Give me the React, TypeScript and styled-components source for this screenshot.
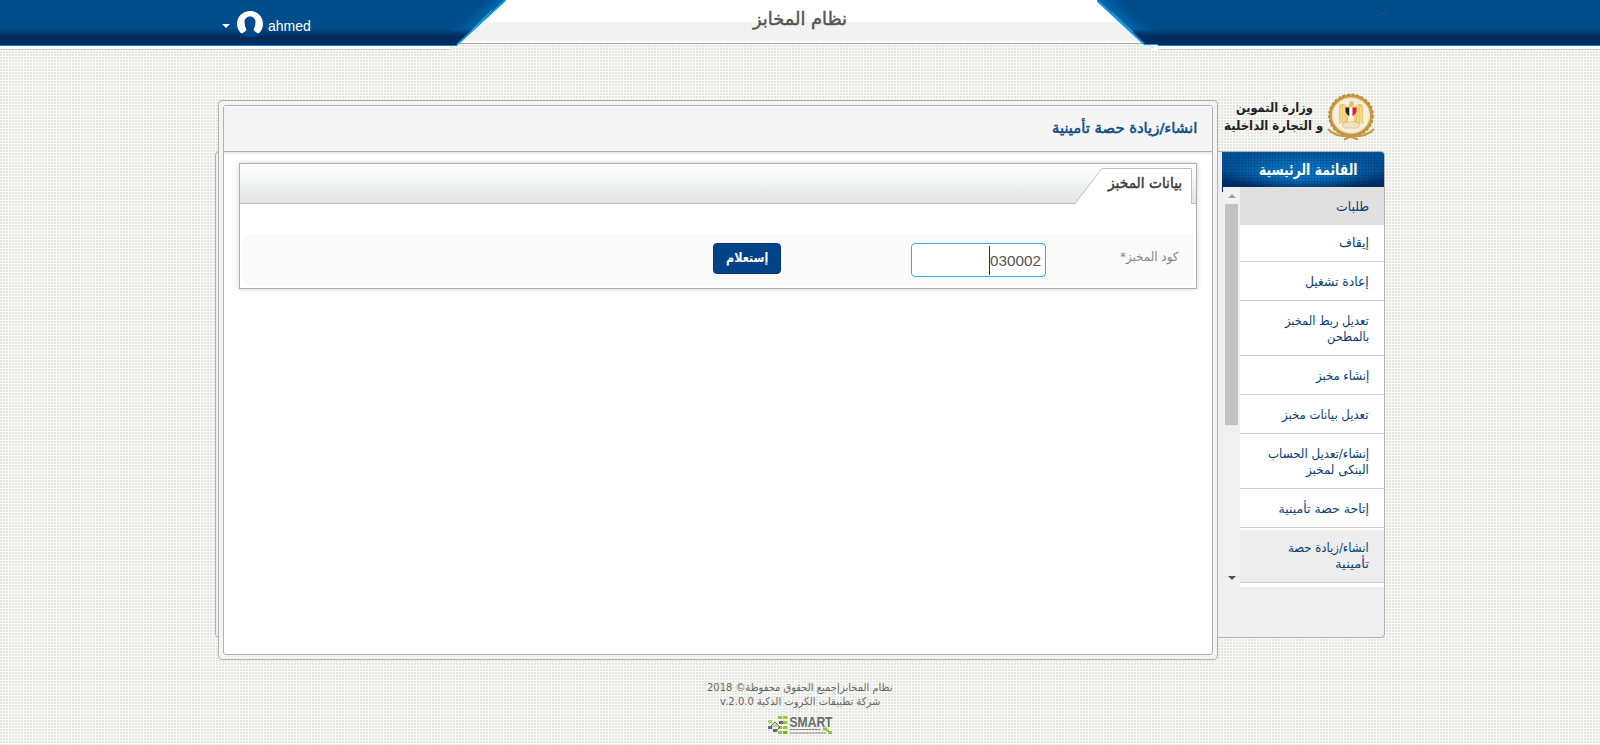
import React, { useLayoutEffect, useRef, useState } from 'react';
import styled, { createGlobalStyle } from 'styled-components';

const Global = createGlobalStyle`
  *, *::before, *::after { box-sizing: border-box; }
  html { height: 100%; }
  body {
    margin: 0;
    min-height: 100%;
    overflow: hidden;
    font-family: "DejaVu Sans", "Liberation Sans", sans-serif;
    background-color: #e4e6df;
    background-image:
      linear-gradient(to right, transparent 2px, #fafbf7 2px),
      linear-gradient(to bottom, transparent 2px, #fafbf7 2px);
    background-size: 3px 3px;
  }
`;

/* ---------- text that keeps a set width ---------- */

const FitBox = styled.span<{ $width: number }>`
  display: inline-flex;
  justify-content: flex-start;
  width: ${p => p.$width}px;
  vertical-align: top;
  direction: rtl;
`;

const FitInner = styled.span`
  flex: none;
  white-space: nowrap;
  transform-origin: right center;
`;

function Fit({ width, children }: { width: number; children: React.ReactNode }) {
  const ref = useRef<HTMLSpanElement>(null);
  const [scale, setScale] = useState(1);
  useLayoutEffect(() => {
    if (ref.current) setScale(width / ref.current.offsetWidth);
  }, [width]);
  return (
    <FitBox $width={width}>
      <FitInner ref={ref} style={{ transform: `scaleX(${scale})` }}>{children}</FitInner>
    </FitBox>
  );
}

/* ---------- top bar ---------- */

const TopBar = styled.header`
  display: flex;
  height: 50px;
`;

const Wing = styled.div<{ $width: number }>`
  width: ${p => p.$width}px;
  flex: none;
  height: 50px;
  background: linear-gradient(#004d8b 0, #004d8b 28px, #003a70 33px, #002c5c 37px, #002b5a 45px,
    #0d83d3 45px, #0d83d3 46px, #fff 46px, #fff 49px, #c9cbc8 49px);
`;

const WingContent = styled.div`
  display: flex;
  align-items: center;
  height: 48px;
  padding-left: 222px;
  gap: 7px;
`;

const Caret = styled.i`
  border: 4px solid transparent;
  border-top-color: #fff;
  border-bottom: 0;
  margin-top: 3px;
`;

const UserName = styled.span`
  margin: 4px 0 0 -2px;
  color: #fff;
  font: 14px/18px "Liberation Sans", sans-serif;
`;

const Avatar = styled.svg`
  width: 26px;
  height: 26px;
`;

const Corner = styled.svg`
  flex: none;
  height: 50px;
`;

const Center = styled.div`
  flex: none;
  width: 591px;
  height: 44px;
  padding-right: 2px;
  text-align: center;
  background: linear-gradient(#fff 22px, #f2f2f2 22px, #f2f2f2 41px, #fff 41px, #fff 43px, #a5aea6 43px);
`;

const SystemName = styled.h1`
  margin: 0;
  padding-top: 6px;
  font-size: 18px;
  line-height: 26px;
  font-weight: 400;
  -webkit-text-stroke: 0.5px #555;
  color: #555;
`;

const Dash = styled.i`
  display: block;
  width: 4px;
  height: 1px;
  margin: 10px 0 0 222px;
  background: #4a2c38;
`;

/* ---------- stage ---------- */

const Stage = styled.main`
  display: grid;
  grid-template-columns: 3px 1000px 167px;
  grid-template-rows: 51px 487px 22px;
  margin: 50px 0 0 215px;
`;

const BackPanel = styled.div`
  grid-column: 1 / 4;
  grid-row: 2;
  border: 1px solid #b0b2b3;
  border-radius: 4px;
  background: #efefef;
`;

const MainPanel = styled.section`
  grid-column: 2;
  grid-row: 1 / 4;
  padding: 4px;
  border: 1px solid #b0b0b0;
  border-radius: 4px;
  background: #f4f4f5;
  z-index: 1;
`;

const MainInner = styled.div`
  height: 100%;
  border: 1px solid #afafaf;
  border-radius: 3px;
  background: #fff;
  overflow: hidden;
`;

const PageTitle = styled.h2`
  margin: 0;
  height: 46px;
  padding: 10px 15px 0 0;
  border-top: 1px solid #fff;
  border-bottom: 1px solid #afafaf;
  background: #f5f5f5;
  box-shadow: 0 1px 3px rgba(0, 0, 0, 0.14);
  direction: rtl;
  font-size: 14.5px;
  line-height: 22px;
  font-weight: 400;
  -webkit-text-stroke: 0.5px #0c4b87;
  color: #0c4b87;
`;

const Card = styled.div`
  height: 126px;
  margin: 11px 15px 0;
  border: 1px solid #b0b0b0;
  box-shadow: 0 0 5px rgba(0, 0, 0, 0.2);
`;

const TabStrip = styled.div`
  display: flex;
  justify-content: flex-end;
  height: 40px;
  border-bottom: 1px solid #bfbfbf;
  background: linear-gradient(#fff, #f7f8f8 35%, #e8e8e8 80%, #e4e4e4);
`;

const Tab = styled.div`
  display: grid;
  width: 117px;
  height: 36px;
  margin: 4px 4px 0 0;
`;

const TabShape = styled.svg`
  grid-area: 1 / 1;
  width: 117px;
  height: 36px;
`;

const TabLabel = styled.div`
  grid-area: 1 / 1;
  padding: 4px 10px 0 0;
  direction: rtl;
  font-size: 14.5px;
  line-height: 22px;
  font-weight: 400;
  -webkit-text-stroke: 0.5px #3b3b3b;
  color: #3b3b3b;
`;

const FormRow = styled.div`
  display: flex;
  flex-direction: row-reverse;
  align-items: flex-start;
  height: 50px;
  margin: 31px 3px 0;
  padding-right: 15px;
  background: #fafafa;
`;

const FieldLabel = styled.label`
  width: 132px;
  padding-top: 13px;
  direction: rtl;
  font-size: 12.5px;
  line-height: 18px;
  color: #888;
`;

const CodeInput = styled.div`
  display: flex;
  justify-content: flex-end;
  align-items: center;
  width: 135px;
  height: 34px;
  margin-top: 8px;
  padding: 1px 4px 0 0;
  border: 1px solid #39a9e0;
  border-radius: 4px;
  background: #fff;
  font: 15.3px/20px "Liberation Sans", sans-serif;
  color: #555;
`;

const TextCursor = styled.i`
  width: 1px;
  height: 29px;
  margin-top: -1px;
  background: #333;
`;

const Query = styled.button`
  width: 68px;
  height: 31px;
  margin: 8px 130px 0 0;
  padding: 0 0 1px;
  border: 1px solid #00356f;
  border-radius: 4px;
  background: #004487;
  color: #fff;
  font: 700 13px/28px "DejaVu Sans", sans-serif;
`;

/* ---------- side ---------- */

const Brand = styled.div`
  grid-column: 3;
  grid-row: 1;
  display: flex;
  gap: 3px;
  margin-top: -7px;
  padding-left: 6px;
`;

const BrandText = styled.div`
  width: 100px;
  padding-top: 6px;
  text-align: center;
  font-size: 13px;
  line-height: 18px;
  font-weight: 700;
  color: #222;
`;

const Emblem = styled.svg`
  flex: none;
  width: 48px;
  height: 48px;
`;

const Side = styled.aside`
  grid-column: 3;
  grid-row: 2;
  padding: 1px 1px 0 4px;
  z-index: 1;
`;

const SideTitle = styled.h3`
  margin: 0;
  height: 35px;
  padding: 6px 26px 0 0;
  border-radius: 0 3px 0 0;
  direction: rtl;
  font-size: 15.5px;
  line-height: 24px;
  font-weight: 700;
  color: #fff;
  background:
    linear-gradient(to right, transparent 2px, rgba(0, 25, 70, 0.16) 2px) 0 0 / 3px 3px,
    linear-gradient(to bottom, transparent 2px, rgba(0, 25, 70, 0.16) 2px) 0 0 / 3px 3px,
    radial-gradient(ellipse 82px 20px at 50% 55%, #0878c6, #0670bc 40%, rgba(8, 105, 180, 0)),
    linear-gradient(#0058a0, #004e92 50%, #003068 88%, #002b60);
`;

const SideBody = styled.div`
  display: flex;
  height: 400px;
`;

const Scroll = styled.div`
  display: flex;
  flex-direction: column;
  align-items: center;
  flex: none;
  width: 18px;
  padding-left: 1px;
  background: linear-gradient(#00305f, #00305f) 0 0 / 1px 5px no-repeat, #f0f0f0;
`;

const ScrollUp = styled.i`
  margin-top: 7px;
  border: 4px solid transparent;
  border-top: 0;
  border-bottom-color: #a3a3a3;
`;

const Thumb = styled.div`
  width: 13px;
  height: 221px;
  margin: 6px 0 151px;
  background: #c1c1c1;
`;

const ScrollDown = styled.i`
  border: 4px solid transparent;
  border-bottom: 0;
  border-top-color: #505050;
`;

const Menu = styled.ul`
  flex: 1;
  margin: 0;
  padding: 0;
  list-style: none;
  background: #fff;
`;

const MenuItem = styled.li<{ $kind?: 'group' | 'first' | 'current' }>`
  display: flex;
  flex-direction: column;
  align-items: flex-end;
  padding: ${p => (p.$kind === 'first' ? '10px 15px' : p.$kind === 'group' ? '11px 15px' : '12px 15px 10px')};
  border-bottom: ${p => (p.$kind === 'group' ? 0 : '1px solid #d0d0d0')};
  background: ${p =>
    p.$kind === 'group' ? '#e0e0e0'
    : p.$kind === 'current' ? 'linear-gradient(#fff 2px, #ededed 2px)'
    : '#fff'};
  font-size: ${p => (p.$kind === 'group' ? 13.5 : 12.5)}px;
  line-height: 16px;
  color: #0a3d78;
`;

/* ---------- footer ---------- */

const Footer = styled.footer`
  display: flex;
  flex-direction: column;
  align-items: center;
  padding-top: 20px;
  font-size: 10.5px;
  line-height: 14px;
  color: #666;
`;

const SmartLogo = styled.svg`
  width: 66px;
  height: 20px;
  margin: 7px 0 0 2px;
  overflow: visible;
`;

type Line = [string, number];
const menu: { kind?: 'group' | 'first' | 'current'; lines: Line[] }[] = [
  { kind: 'group', lines: [['طلبات', 33]] },
  { kind: 'first', lines: [['إيقاف', 30]] },
  { lines: [['إعادة تشغيل', 64]] },
  { lines: [['تعديل ربط المخبز', 84], ['بالمطحن', 42]] },
  { lines: [['إنشاء مخبز', 53]] },
  { lines: [['تعديل بيانات مخبز', 87]] },
  { lines: [['إنشاء/تعديل الحساب', 101], ['البنكى لمخبز', 63]] },
  { lines: [['إتاحة حصة تأمينية', 90]] },
  { kind: 'current', lines: [['انشاء/زيادة حصة', 81], ['تأمينية', 34]] },
];

const tiles: [number, number, string][] = [
  [10, 1, '#8dc63f'], [15, 1, '#8dc63f'], [0, 5, '#a9d16c'], [5, 9, '#b5d98a'], [11, 6, '#6b6472'],
  [15, 6, '#8dc63f'], [0, 11, '#6b6472'], [10, 11, '#8dc63f'], [15, 11, '#8dc63f'], [5, 14, '#6b6472'],
  [10, 16, '#8dc63f'], [15, 16, '#7ab800'],
];

function EmblemArt() {
  return (
    <Emblem viewBox="0 0 48 48">
      <ellipse cx="24" cy="22.500" rx="20.500" ry="19.500" fill="#f6efdf" stroke="#c59a45" strokeWidth="3" />
      <ellipse cx="24" cy="22.500" rx="22" ry="21" fill="none" stroke="#b98d35" strokeWidth="1.800" strokeDasharray="3 1.600" />
      <ellipse cx="24" cy="22.500" rx="18.500" ry="17.500" fill="none" stroke="#ecd8a4" strokeWidth="1" />
      <path d="M1 36c5 6 13 7.500 22 7.500M47 36c-5 6-13 7.500-22 7.500M17 46.500l7-3 7 3" fill="none" stroke="#c59a45" strokeWidth="2" />
      <path d="M19 13c-2-3-7-3-7 1v17l3-2 1 4 3-3 2 3V14zM29 13c2-3 7-3 7 1v17l-3-2-1 4-3-3-2 3V14z" fill="#efc869" />
      <path d="M14 14v15M17 13v16M31 13v16M34 14v15" stroke="#fbeabb" strokeWidth="0.900" />
      <path d="M22 12c0-5 5-5 5-1l-1 4h-4z" fill="#e6c06a" />
      <path d="M18.500 14.500h4v9q-3-2-4-5z" fill="#222" />
      <path d="M22.500 14.500h3v9l-1.500 1-1.500-1z" fill="#fff" />
      <path d="M25.500 14.500h4v4q-1 3-4 5z" fill="#e01e2b" />
      <path d="M15 31q9-5 18 0l-2 4H17z" fill="#efe3c3" stroke="#d5bb80" strokeWidth="0.700" />
    </Emblem>
  );
}

export default function App() {
  return (
    <>
      <Global />
      <TopBar>
        <Wing $width={450}>
          <WingContent>
            <Caret />
            <Avatar viewBox="0 0 26 26">
              <circle cx="13" cy="13" r="13" fill="#00498a" />
              <path d="M4.200 22.500A13 13 0 1 1 21.800 22.500Q17.500 21 16.500 18.500Q18.500 15 18.500 11C18.500 3.500 7.500 3.500 7.500 11Q7.500 15 9.500 18.500Q8.500 21 4.200 22.500Z" fill="#fff" />
            </Avatar>
            <UserName>ahmed</UserName>
          </WingContent>
        </Wing>
        <Corner width="56" viewBox="0 0 56 50">
          <defs>
            <linearGradient id="shade" x1="0" y1="0" x2="0" y2="45" gradientUnits="userSpaceOnUse">
              <stop offset="0.622" stopColor="#004d8b" stopOpacity="0" />
              <stop offset="0.733" stopColor="#003a70" />
              <stop offset="0.822" stopColor="#002c5c" />
              <stop offset="1" stopColor="#002b5a" />
            </linearGradient>
            <linearGradient id="glowLeft" x1="21" y1="11" x2="31.500" y2="22.500" gradientUnits="userSpaceOnUse">
              <stop offset="0" stopColor="#0077c0" stopOpacity="0" />
              <stop offset="1" stopColor="#0084d0" stopOpacity="0.500" />
            </linearGradient>
            <linearGradient id="glowRight" x1="34.500" y1="10.500" x2="24" y2="22" gradientUnits="userSpaceOnUse">
              <stop offset="0" stopColor="#0077c0" stopOpacity="0" />
              <stop offset="1" stopColor="#0084d0" stopOpacity="0.500" />
            </linearGradient>
          </defs>
          <path d="M56 0V22H20L46 0Z" fill="#fff" />
          <path d="M30 22H56V41H10Z" fill="#f2f2f2" />
          <path d="M8 41H56V43H6Z" fill="#fff" />
          <path d="M7 43.500H56" stroke="#a5aea6" />
          <path d="M0 0H56L7 45H0Z" fill="#004d8b" />
          <path d="M0 0H56L7 45H0Z" fill="url(#glowLeft)" />
          <path d="M0 0H56L7 45H0Z" fill="url(#shade)" />
          <path d="M55.500 0L7 44.700" stroke="#079bea" strokeWidth="1.800" />
          <path d="M42 10L22 30" stroke="#6db3d3" strokeWidth="0.700" />
          <path d="M0 45.500H7" stroke="#0d83d3" />
          <path d="M0 46H3L0 49Z" fill="#fff" />
          <path d="M-2 50L2 46" stroke="#c9cbc8" />
        </Corner>
        <Center>
          <SystemName><Fit width={94}>نظام المخابز</Fit></SystemName>
        </Center>
        <Corner width="61" viewBox="0 0 61 50">
          <path d="M0 0H10L40 22H0Z" fill="#fff" />
          <path d="M0 22H25L45 41H0Z" fill="#f2f2f2" />
          <path d="M0 41H45V43H0Z" fill="#fff" />
          <path d="M0 43.500H48" stroke="#a5aea6" />
          <path d="M0 0H61V44H47.500Z" fill="#004d8b" />
          <path d="M0 0H61V44H47.500Z" fill="url(#glowRight)" />
          <path d="M0 0H61V44H47.500Z" fill="url(#shade)" />
          <path d="M-0.500 0L47 44" stroke="#079bea" strokeWidth="1.800" />
          <path d="M15 12L36 32" stroke="#6db3d3" strokeWidth="0.700" />
          <path d="M47 44.500H61" stroke="#0794e6" />
          <path d="M50 45H61V50H56Z" fill="#fff" />
          <path d="M51 45L57 48" stroke="#d0d0cd" />
        </Corner>
        <Wing $width={442}><Dash /></Wing>
      </TopBar>

      <Stage>
        <BackPanel />
        <MainPanel>
          <MainInner>
            <PageTitle><Fit width={145}>انشاء/زيادة حصة تأمينية</Fit></PageTitle>
            <Card>
              <TabStrip>
                <Tab>
                  <TabShape viewBox="0 0 117 36">
                    <path d="M0 36L27 0.500H116.500V36Z" fill="#fff" />
                    <path d="M0 35.500L27 0.500H116.500V35.500" fill="none" stroke="#bfbfbf" />
                  </TabShape>
                  <TabLabel><Fit width={74}>بيانات المخبز</Fit></TabLabel>
                </Tab>
              </TabStrip>
              <FormRow>
                <FieldLabel><Fit width={58}>كود المخبز*</Fit></FieldLabel>
                <CodeInput><TextCursor />030002</CodeInput>
                <Query><Fit width={42}>إستعلام</Fit></Query>
              </FormRow>
            </Card>
          </MainInner>
        </MainPanel>
        <Brand>
          <BrandText>
            <Fit width={77}>وزارة التموين</Fit>
            <Fit width={99}>و التجارة الداخلية</Fit>
          </BrandText>
          <EmblemArt />
        </Brand>
        <Side>
          <SideTitle><Fit width={99}>القائمة الرئيسية</Fit></SideTitle>
          <SideBody>
            <Scroll><ScrollUp /><Thumb /><ScrollDown /></Scroll>
            <Menu>
              {menu.map((item, i) => (
                <MenuItem key={i} $kind={item.kind}>
                  {item.lines.map(([text, width]) => <Fit key={text} width={width}>{text}</Fit>)}
                </MenuItem>
              ))}
            </Menu>
          </SideBody>
        </Side>
      </Stage>

      <Footer>
        <Fit width={185}>نظام المخابز|جميع الحقوق محفوظة© 2018</Fit>
        <Fit width={160}>شركة تطبيقات الكروت الذكية v.2.0.0</Fit>
        <SmartLogo viewBox="0 0 66 20">
          {tiles.map(([x, y, c]) => <rect key={`${x}-${y}`} x={x} y={y} width="4.300" height="3" rx="0.500" fill={c} />)}
          <path d="M2 12L7 7L12 12L7 17" fill="none" stroke="#6b6472" strokeWidth="1" />
          <text x="21.500" y="12" textLength="43" lengthAdjust="spacingAndGlyphs" fontFamily="Liberation Sans, sans-serif" fontWeight="700" fontSize="15" fill="#6b6b6b">SMART</text>
          <path d="M22 14.500H53M22 18H58" stroke="#777" strokeWidth="1" strokeDasharray="2.500 0.600" />
          <path d="M55 12.500h4v3h-4zM60 16h4v3h-4zM58 14.500h3v2h-3z" fill="#8dc63f" />
        </SmartLogo>
      </Footer>
    </>
  );
}
